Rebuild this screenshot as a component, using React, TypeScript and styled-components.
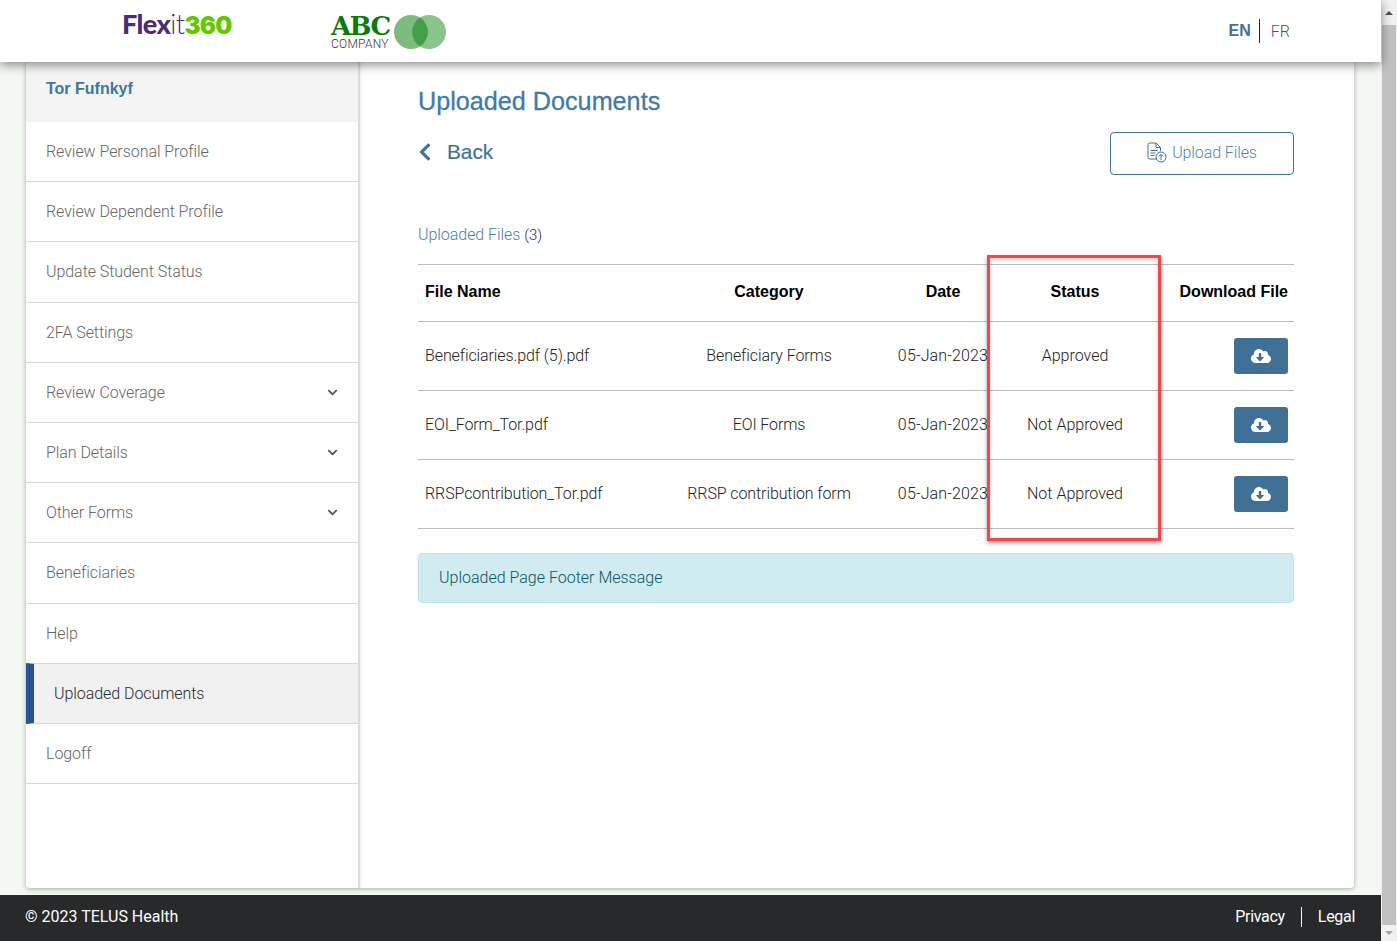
import React from "react";
import styled, { createGlobalStyle } from "styled-components";
import { FaCloudDownloadAlt, FaChevronDown, FaChevronLeft } from "react-icons/fa";

const Global = createGlobalStyle`
  html, body { margin: 0; padding: 0; height: 100%; overflow: hidden; }
  body { font-family: Roboto, "Liberation Sans", sans-serif; font-weight: 300; font-size: 16px; color: #212529; }
  * { box-sizing: border-box; }
`;

const Shell = styled.div`
  display: flex;
  width: 1397px;
  height: 941px;
  position: relative;
  overflow: hidden;
`;
const Page = styled.div`
  width: 1381px;
  height: 941px;
  display: flex;
  flex-direction: column;
  background: #f3f8f2;
`;
const Scrollbar = styled.div`
  width: 16px;
  height: 941px;
  background: #f1f1f1;
  display: flex;
  flex-direction: column;
  align-items: center;
`;
const ScrollArrow = styled.div<{ $down?: boolean }>`
  height: ${(p) => (p.$down ? "16px" : "25px")};
  flex: none;
  display: flex;
  align-items: ${(p) => (p.$down ? "flex-start" : "center")};
  padding-top: ${(p) => (p.$down ? "6px" : "0")};
  &::before {
    content: "";
    border-left: 4px solid transparent;
    border-right: 4px solid transparent;
    ${(p) => (p.$down ? "border-top: 4px solid #a3a3a3;" : "border-bottom: 4px solid #505050;")}
  }
`;
const ScrollThumb = styled.div`
  width: 14px;
  flex: 1;
  background: #c1c1c1;
`;

const Header = styled.header`
  height: 62px;
  flex: none;
  background: #fff;
  display: flex;
  align-items: center;
  position: relative;
  z-index: 2;
  box-shadow: 0 3px 10px rgba(0, 0, 0, 0.45);
  padding: 0 91px 0 122px;
`;
const Flexit = styled.div`
  font-family: Lato, "Liberation Sans", sans-serif;
  font-size: 27px;
  line-height: 26px;
  font-weight: 900;
  letter-spacing: -0.55px;
  color: #4b2d73;
  width: 209px;
  margin-top: -12px;
  white-space: nowrap;
`;
const FlexitLight = styled.span`
  font-weight: 300;
`;
const FlexitGreen = styled.span`
  font-family: Inter, "Liberation Sans", sans-serif;
  font-size: 24px;
  font-weight: 900;
  letter-spacing: -0.7px;
  color: #5fc900;
`;
const Company = styled.div`
  display: flex;
  align-items: center;
  gap: 3px;
  margin-top: 2px;
`;
const CompanyText = styled.div`
  display: flex;
  flex-direction: column;
  width: 60px;
`;
const CompanyName = styled.div`
  font-family: "DejaVu Serif", "Liberation Serif", serif;
  font-weight: 700;
  font-size: 26px;
  line-height: 24px;
  letter-spacing: -1.6px;
  color: #0b7a0b;
`;
const CompanySub = styled.div`
  font-family: Roboto, sans-serif;
  font-size: 12px;
  line-height: 12px;
  font-weight: 300;
  letter-spacing: 0.25px;
  color: #333;
`;
const Lang = styled.nav`
  margin-left: auto;
  display: flex;
  align-items: center;
`;
const LangActive = styled.span`
  font-family: "Liberation Sans", sans-serif;
  font-weight: 700;
  color: #41719c;
  font-size: 16px;
  padding-right: 8px;
  border-right: 1px solid #212529;
  line-height: 24px;
`;
const LangOther = styled.span`
  font-size: 16px;
  color: #555;
  font-weight: 300;
  padding-left: 11px;
`;

const Body = styled.div`
  flex: 1;
  min-height: 0;
  padding: 0 27px 7px 26px;
`;
const Card = styled.div`
  height: 100%;
  display: flex;
  background: #fff;
  border-radius: 0 0 4px 4px;
  box-shadow: 0 1px 5px rgba(0, 0, 0, 0.3);
`;
const Sidebar = styled.aside`
  width: 334px;
  flex: none;
  border-right: 2px solid #dcdcdc;
  box-shadow: 1px 0 2px rgba(0, 0, 0, 0.08);
`;
const UserRow = styled.div`
  height: 60px;
  background: #f4f4f4;
  padding: 15px 20px 0;
  font-family: "Liberation Sans", sans-serif;
  font-weight: 700;
  color: #41759f;
  line-height: 24px;
`;
const NavRow = styled.div<{ $active?: boolean }>`
  height: 60.2px;
  display: flex;
  align-items: center;
  justify-content: space-between;
  padding: 0 20px;
  border-bottom: 1px solid #d8d8d8;
  color: #666;
  letter-spacing: -0.06px;
  ${(p) =>
    p.$active &&
    `background: #f1f1f1; border-left: 8px solid #2a5291; color: #2b2b2b; border-top: 1px solid #d8d8d8; margin-top: -1px; height: 61.2px;`}
`;
const Chevron = styled(FaChevronDown)`
  font-size: 11px;
  color: #555;
`;
const Main = styled.main`
  flex: 1;
  min-width: 0;
  padding: 24px 60px 0 58px;
`;
const Title = styled.h1`
  margin: 0;
  font-family: "Liberation Sans", sans-serif;
  font-weight: 400;
  font-size: 25.2px;
  line-height: 30px;
  color: #3f7ba9;
  -webkit-text-stroke: 0.3px #3f7ba9;
`;
const ActionRow = styled.div`
  display: flex;
  align-items: center;
  justify-content: space-between;
  margin-top: 16px;
`;
const Back = styled.div`
  display: flex;
  align-items: center;
  gap: 15px;
  margin-top: -4px;
  font-family: "Liberation Sans", sans-serif;
  font-size: 20.8px;
  color: #41719c;
  -webkit-text-stroke: 0.2px #41719c;
`;
const BackIcon = styled(FaChevronLeft)`
  width: 14px;
  height: 20px;
`;
const UploadButton = styled.button`
  width: 184px;
  height: 43px;
  background: #fff;
  border: 1px solid #3f7299;
  border-radius: 4px;
  display: flex;
  align-items: center;
  justify-content: center;
  gap: 5px;
  font-family: inherit;
  font-weight: 300;
  font-size: 16px;
  letter-spacing: -0.1px;
  color: #4f86ad;
  padding: 0 0 2px 0;
`;
const FilesLabel = styled.div`
  margin-top: 48px;
  line-height: 24px;
  color: #4f7ea3;
  letter-spacing: -0.05px;
`;
const FilesCount = styled.span`
  color: #333;
  font-size: 15px;
`;
const Table = styled.table`
  margin-top: 17px;
  width: 100%;
  table-layout: fixed;
  border-collapse: collapse;
  border-top: 1px solid #bdbdbd;
`;
const Th = styled.th<{ $align: string }>`
  height: 57px;
  padding: 0 ${(p) => (p.$align === "right" ? 6 : 7)}px 2px 7px;
  font-family: "Liberation Sans", sans-serif;
  font-weight: 700;
  font-size: 16px;
  color: #000;
  text-align: ${(p) => p.$align};
  border-bottom: 1px solid #bdbdbd;
  white-space: nowrap;
`;
const Td = styled.td<{ $spacing?: number; $center?: boolean }>`
  height: 69px;
  padding: 0 7px 2px;
  text-align: ${(p) => (p.$center ? "center" : "left")};
  border-bottom: 1px solid #bdbdbd;
  color: #222;
  white-space: nowrap;
  letter-spacing: ${(p) => p.$spacing ?? 0}px;
`;
const ActionTd = styled.td`
  height: 69px;
  padding: 0 6px 0 0;
  text-align: right;
  border-bottom: 1px solid #bdbdbd;
`;
const DownloadButton = styled.button`
  display: inline-flex;
  align-items: center;
  justify-content: center;
  vertical-align: middle;
  width: 54px;
  height: 36px;
  background: #417096;
  border: none;
  border-radius: 3px;
  color: #fff;
  font-size: 20px;
  padding: 0;
`;
const Alert = styled.div`
  margin-top: 24px;
  height: 50px;
  padding: 0 20px 2px;
  display: flex;
  align-items: center;
  background: #d1ecf1;
  border: 1px solid #bee5eb;
  border-radius: 4px;
  color: #0c5460;
`;
const Footer = styled.footer`
  height: 46px;
  flex: none;
  background: #27292b;
  color: #fff;
  display: flex;
  align-items: center;
  justify-content: space-between;
  padding: 0 26px 3px 25px;
  font-weight: 400;
`;
const FooterLinks = styled.div`
  display: flex;
  align-items: center;
  letter-spacing: -0.3px;
`;
const FooterLink = styled.span<{ $divider?: boolean }>`
  line-height: 20px;
  padding: 0 ${(p) => (p.$divider ? "16px" : "0")} 0 ${(p) => (p.$divider ? "0" : "16px")};
  ${(p) => p.$divider && "border-right: 1px solid #fff;"}
`;
const Annotation = styled.div`
  position: absolute;
  left: 987px;
  top: 255px;
  width: 174px;
  height: 286px;
  border: 3px solid #f04848;
  box-shadow: 0 2px 4px rgba(0, 0, 0, 0.4), inset 0 2px 4px rgba(0, 0, 0, 0.2);
  pointer-events: none;
  z-index: 3;
`;

const nav: { label: string; chevron?: boolean; active?: boolean }[] = [
  { label: "Review Personal Profile" },
  { label: "Review Dependent Profile" },
  { label: "Update Student Status" },
  { label: "2FA Settings" },
  { label: "Review Coverage", chevron: true },
  { label: "Plan Details", chevron: true },
  { label: "Other Forms", chevron: true },
  { label: "Beneficiaries" },
  { label: "Help" },
  { label: "Uploaded Documents", active: true },
  { label: "Logoff" },
];

const rows = [
  ["Beneficiaries.pdf (5).pdf", "Beneficiary Forms", "05-Jan-2023", "Approved"],
  ["EOI_Form_Tor.pdf", "EOI Forms", "05-Jan-2023", "Not Approved"],
  ["RRSPcontribution_Tor.pdf", "RRSP contribution form", "05-Jan-2023", "Not Approved"],
];

const FileUploadIcon = () => (
  <svg width="20" height="21" viewBox="0 0 20 21" fill="none" stroke="#41719c" strokeWidth="1">
    <path d="M11 13.5V17H2.5A1.5 1.5 0 0 1 1 15.5V2.5A1.5 1.5 0 0 1 2.5 1H9l4.5 4.5V9" />
    <path d="M9 1v4.5h4.5" />
    <path d="M3.5 8.5h7M3.5 11h5M3.5 13.5h4" />
    <circle cx="14" cy="15" r="5" fill="#fff" />
    <path d="M14 18v-5.5M11.8 14.5l2.2-2.2 2.2 2.2" />
  </svg>
);

const CompanyMark = () => (
  <svg width="52" height="34" viewBox="0 0 52 34">
    <circle cx="17" cy="17" r="17" fill="#7dba7d" />
    <circle cx="35" cy="17" r="17" fill="#8bc48b" />
    <path d="M26 2.6a17 17 0 0 1 0 28.8a17 17 0 0 1 0-28.8z" fill="#43a047" />
  </svg>
);

export default function App() {
  return (
    <Shell>
      <Global />
      <Page>
        <Header>
          <Flexit>
            Flex<FlexitLight>it</FlexitLight>
            <FlexitGreen>360</FlexitGreen>
          </Flexit>
          <Company>
            <CompanyText>
              <CompanyName>ABC</CompanyName>
              <CompanySub>COMPANY</CompanySub>
            </CompanyText>
            <CompanyMark />
          </Company>
          <Lang>
            <LangActive>EN</LangActive>
            <LangOther>FR</LangOther>
          </Lang>
        </Header>
        <Body>
          <Card>
            <Sidebar>
              <UserRow>Tor Fufnkyf</UserRow>
              {nav.map((n) => (
                <NavRow key={n.label} $active={n.active}>
                  {n.label}
                  {n.chevron && <Chevron />}
                </NavRow>
              ))}
            </Sidebar>
            <Main>
              <Title>Uploaded Documents</Title>
              <ActionRow>
                <Back>
                  <BackIcon />
                  Back
                </Back>
                <UploadButton>
                  <FileUploadIcon />
                  Upload Files
                </UploadButton>
              </ActionRow>
              <FilesLabel>
                Uploaded Files <FilesCount>(3)</FilesCount>
              </FilesLabel>
              <Table>
                <colgroup>
                  <col style={{ width: 242 }} />
                  <col style={{ width: 218 }} />
                  <col style={{ width: 130 }} />
                  <col style={{ width: 134 }} />
                  <col style={{ width: 152 }} />
                </colgroup>
                <thead>
                  <tr>
                    <Th $align="left">File Name</Th>
                    <Th $align="center">Category</Th>
                    <Th $align="center">Date</Th>
                    <Th $align="center">Status</Th>
                    <Th $align="right">Download File</Th>
                  </tr>
                </thead>
                <tbody>
                  {rows.map((r) => (
                    <tr key={r[0]}>
                      <Td $spacing={-0.1}>{r[0]}</Td>
                      <Td $center $spacing={-0.1}>{r[1]}</Td>
                      <Td $center $spacing={0.15}>{r[2]}</Td>
                      <Td $center>{r[3]}</Td>
                      <ActionTd>
                        <DownloadButton aria-label="Download">
                          <FaCloudDownloadAlt />
                        </DownloadButton>
                      </ActionTd>
                    </tr>
                  ))}
                </tbody>
              </Table>
              <Alert>Uploaded Page Footer Message</Alert>
            </Main>
          </Card>
        </Body>
        <Footer>
          <span>© 2023 TELUS Health</span>
          <FooterLinks>
            <FooterLink $divider>Privacy</FooterLink>
            <FooterLink>Legal</FooterLink>
          </FooterLinks>
        </Footer>
      </Page>
      <Scrollbar>
        <ScrollArrow />
        <ScrollThumb />
        <ScrollArrow $down />
      </Scrollbar>
      <Annotation />
    </Shell>
  );
}
